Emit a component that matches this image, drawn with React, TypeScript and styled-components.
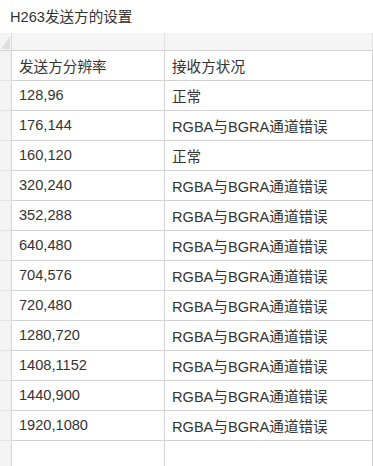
import React from "react";
import styled, { createGlobalStyle } from "styled-components";

const rows: [string, string][] = [
  ["128,96", "正常"],
  ["176,144", "RGBA与BGRA通道错误"],
  ["160,120", "正常"],
  ["320,240", "RGBA与BGRA通道错误"],
  ["352,288", "RGBA与BGRA通道错误"],
  ["640,480", "RGBA与BGRA通道错误"],
  ["704,576", "RGBA与BGRA通道错误"],
  ["720,480", "RGBA与BGRA通道错误"],
  ["1280,720", "RGBA与BGRA通道错误"],
  ["1408,1152", "RGBA与BGRA通道错误"],
  ["1440,900", "RGBA与BGRA通道错误"],
  ["1920,1080", "RGBA与BGRA通道错误"],
];

const App = () => {
  return (
    <>
      <GlobalStyle />
      <Page>
        <Title>H263发送方的设置</Title>
        <Sheet>
          <Corner>
            <Triangle />
          </Corner>
          <HeadCell />
          <HeadCell />

          <Gutter />
          <Cell>发送方分辨率</Cell>
          <Cell>接收方状况</Cell>

          {rows.map(([res, state]) => (
            <React.Fragment key={res}>
              <Gutter />
              <Cell>{res}</Cell>
              <Cell>{state}</Cell>
            </React.Fragment>
          ))}

          <Gutter $last />
          <Cell $last />
          <Cell $last />
        </Sheet>
      </Page>
    </>
  );
};

export default App;

const GlobalStyle = createGlobalStyle`
  body {
    margin: 0;
    background: #ffffff;
    font-family: "Liberation Sans", "Noto Sans CJK SC", sans-serif;
    color: #333333;
  }
`;

const Page = styled.div`
  width: 373px;
  height: 466px;
  overflow: hidden;
`;

const Title = styled.div`
  height: 33px;
  line-height: 34px;
  padding-left: 10px;
  font-size: 14.6px;
  color: #333333;
`;

const Sheet = styled.div`
  display: grid;
  grid-template-columns: 12px 153px 1fr;
  grid-auto-rows: 30px;
  grid-template-rows: 18px;
  font-size: 14.6px;
`;

const Corner = styled.div`
  position: relative;
  background: #f3f3f3;
  border-right: 1px solid #dadada;
  border-bottom: 1px solid #d4d4d4;
`;

const Triangle = styled.div`
  position: absolute;
  right: 1px;
  bottom: 1px;
  width: 0;
  height: 0;
  border-left: 9px solid transparent;
  border-bottom: 12px solid #dedede;
`;

const HeadCell = styled.div`
  background: #f5f5f5;
  border-right: 1px solid #e2e2e2;
  border-bottom: 1px solid #d4d4d4;
`;

const Gutter = styled.div<{ $last?: boolean }>`
  background: #f3f3f3;
  border-right: 1px solid #d4d4d4;
  border-bottom: ${(p) => (p.$last ? "none" : "1px solid #e4e4e4")};
`;

const Cell = styled.div<{ $last?: boolean }>`
  display: flex;
  align-items: center;
  padding-left: 7px;
  padding-bottom: 1px;
  border-right: 1px solid #d4d4d4;
  border-bottom: ${(p) => (p.$last ? "none" : "1px solid #d4d4d4")};
  white-space: nowrap;
  color: #333333;
`;
